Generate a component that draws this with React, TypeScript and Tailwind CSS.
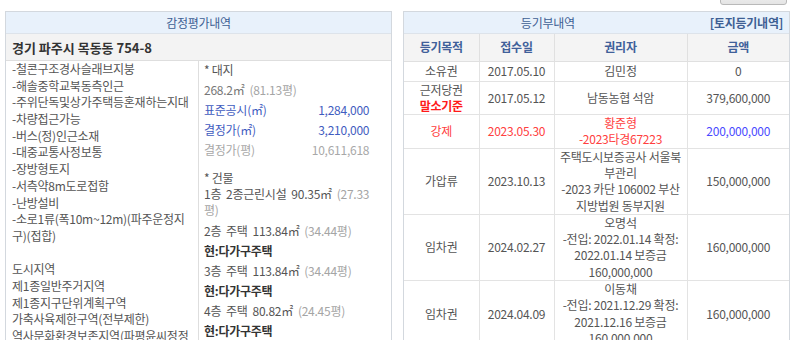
import React from 'react';

const FONT = { fontFamily: '"Noto Sans CJK KR", "Noto Sans", sans-serif' };

const leftLines = [
  '-철콘구조경사슬래브지붕',
  '-해솔중학교북동측인근',
  '-주위단독및상가주택등혼재하는지대',
  '-차량접근가능',
  '-버스(정)인근소재',
  '-대중교통사정보통',
  '-장방형토지',
  '-서측약8m도로접함',
  '-난방설비',
  '-소로1류(폭10m~12m)(파주운정지',
  '구)(접합)',
  '',
  '도시지역',
  '제1종일반주거지역',
  '제1종지구단위계획구역',
  '가축사육제한구역(전부제한)',
  '역사문화환경보존지역(파평윤씨정정',
];

const floors = [
  { floor: '2층  주택  113.84㎡', pyeong: '(34.44평)' },
  { floor: '3층  주택  113.84㎡', pyeong: '(34.44평)' },
  { floor: '4층  주택  80.82㎡', pyeong: '(24.45평)' },
];

function AppraisalPanel() {
  return (
    <div className="w-[387px] shrink-0 border border-[#d3d8de] bg-white">
      <div className="h-[22px] bg-[#e8f1fb] text-center leading-[22px] text-[#3e5f94] border-b border-[#dde3ea]">
        감정평가내역
      </div>
      <div className="h-[27px] bg-[#f3f3f3] px-[6px] text-[13px] leading-[27px] font-bold text-[#333] tracking-normal border-b border-[#dedede]">
        경기 파주시 목동동 754-8
      </div>
      <div className="flex">
        <div className="w-[193px] shrink-0 border-r border-[#dedede] pl-[6px] text-[#555] leading-[16.7px]">
          {leftLines.map((l, i) => (
            <div key={i} className="h-[16.7px] whitespace-nowrap overflow-hidden">{l}</div>
          ))}
        </div>
        <div className="flex-1 pl-[5px] pr-[24px] text-[#555] leading-[17px] whitespace-pre">
          <div className="pb-[1.5px]">* 대지</div>
          <div className="py-[1.5px]">
            <span className="text-[#777]">268.2㎡</span>
            {'  '}
            <span className="text-[#a5a5a5]">(81.13평)</span>
          </div>
          <div className="py-[1.5px] flex justify-between text-[#3f5cc0]">
            <span>표준공시(㎡)</span>
            <span>1,284,000</span>
          </div>
          <div className="py-[1.5px] flex justify-between text-[#3f5cc0]">
            <span>결정가(㎡)</span>
            <span>3,210,000</span>
          </div>
          <div className="py-[1.5px] flex justify-between text-[#a8a8a8]">
            <span>결정가(평)</span>
            <span>10,611,618</span>
          </div>
          <div className="pt-[9px]">* 건물</div>
          <div className="pb-[1.5px] leading-[16.5px]">
            {'1층  2종근린시설  90.35㎡  '}
            <span className="text-[#a5a5a5]">(27.33</span>
            {'\n'}
            <span className="text-[#a5a5a5]">평)</span>
          </div>
          {floors.map((f) => (
            <React.Fragment key={f.floor}>
              <div className="py-[1.5px]">
                {f.floor}
                {'  '}
                <span className="text-[#a5a5a5]">{f.pyeong}</span>
              </div>
              <div className="py-[1.5px] font-bold text-[#333]">현:다가구주택</div>
            </React.Fragment>
          ))}
        </div>
      </div>
    </div>
  );
}

type Row = {
  purpose: React.ReactNode;
  date: string;
  holder: string[];
  amount: string;
  red?: boolean;
  blueAmount?: boolean;
};

const rows: Row[] = [
  { purpose: '소유권', date: '2017.05.10', holder: ['김민정'], amount: '0' },
  {
    purpose: (
      <>
        근저당권
        <br />
        <span className="font-bold text-[#ff1a1a]">말소기준</span>
      </>
    ),
    date: '2017.05.12',
    holder: ['남동농협 석암'],
    amount: '379,600,000',
  },
  {
    purpose: '강제',
    date: '2023.05.30',
    holder: ['황준형', '-2023타경67223'],
    amount: '200,000,000',
    red: true,
    blueAmount: true,
  },
  {
    purpose: '가압류',
    date: '2023.10.13',
    holder: ['주택도시보증공사 서울북', '부관리', '-2023 카단 106002 부산', '지방법원 동부지원'],
    amount: '150,000,000',
  },
  {
    purpose: '임차권',
    date: '2024.02.27',
    holder: ['오명석', '-전입: 2022.01.14 확정:', '2022.01.14 보증금', '160,000,000'],
    amount: '160,000,000',
  },
  {
    purpose: '임차권',
    date: '2024.04.09',
    holder: ['이동채', '-전입: 2021.12.29 확정:', '2021.12.16 보증금', '160,000,000'],
    amount: '160,000,000',
  },
];

function RegistryPanel() {
  const td = 'border-b border-r border-[#e3e3e3] text-center align-middle px-[2px] py-0';
  return (
    <div className="w-[387px] shrink-0 border border-[#d3d8de] bg-white">
      <div className="h-[22px] flex items-center bg-[#e8f1fb] border-b border-[#dde3ea]">
        <div className="flex-1 text-center text-[#3e5f94] pr-[18px]">등기부내역</div>
        <a className="pr-[6px] font-bold text-[#3e5f94]">[토지등기내역]</a>
      </div>
      <table className="w-full table-fixed border-collapse leading-[16.3px]">
        <colgroup>
          <col className="w-[75px]" />
          <col className="w-[75px]" />
          <col className="w-[133px]" />
          <col />
        </colgroup>
        <thead>
          <tr className="h-[27px] bg-[#f4f4f4]">
            {['등기목적', '접수일', '권리자', '금액'].map((h, i) => (
              <th
                key={h}
                className={`font-bold text-[#40609a] border-b border-[#e0e0e0] ${i < 3 ? 'border-r' : ''}`}
              >
                {h}
              </th>
            ))}
          </tr>
        </thead>
        <tbody className="text-[#555]">
          {rows.map((r, i) => (
            <tr key={i} className={i === 0 ? 'h-[20px]' : ''}>
              <td className={`${td} ${r.red ? 'text-[#ff4040]' : ''}`}>{r.purpose}</td>
              <td className={`${td} ${r.red ? 'text-[#ff4040]' : ''}`}>{r.date}</td>
              <td className={`${td} whitespace-nowrap ${r.red ? 'text-[#ff4040]' : ''}`}>
                {r.holder.map((h, j) => (
                  <div key={j}>{h}</div>
                ))}
              </td>
              <td className={`border-b border-[#e3e3e3] text-center align-middle ${r.blueAmount ? 'text-[#4a4aff]' : ''}`}>
                {r.amount}
              </td>
            </tr>
          ))}
        </tbody>
      </table>
    </div>
  );
}

export default function App() {
  return (
    <div className="w-[800px] h-[340px] overflow-hidden bg-white text-[12px] tracking-[-0.25px]" style={FONT}>
      <div className="h-[11px] flex items-end justify-end pr-[13px] pb-[6px]">
        <button className="h-[22px] w-[67px] shrink-0 flex items-center gap-[4px] px-[3px] rounded-[3px] border border-[#b9b9b9] bg-gradient-to-b from-white to-[#e4e4e4] text-[11px] text-[#333]">
          <span className="w-[9px] h-[9px] border border-[#3f6fb8] bg-[#dce9f8]" />
          지도보기
        </button>
      </div>
      <div className="flex pl-[5px] gap-[11px]">
        <AppraisalPanel />
        <RegistryPanel />
      </div>
    </div>
  );
}
